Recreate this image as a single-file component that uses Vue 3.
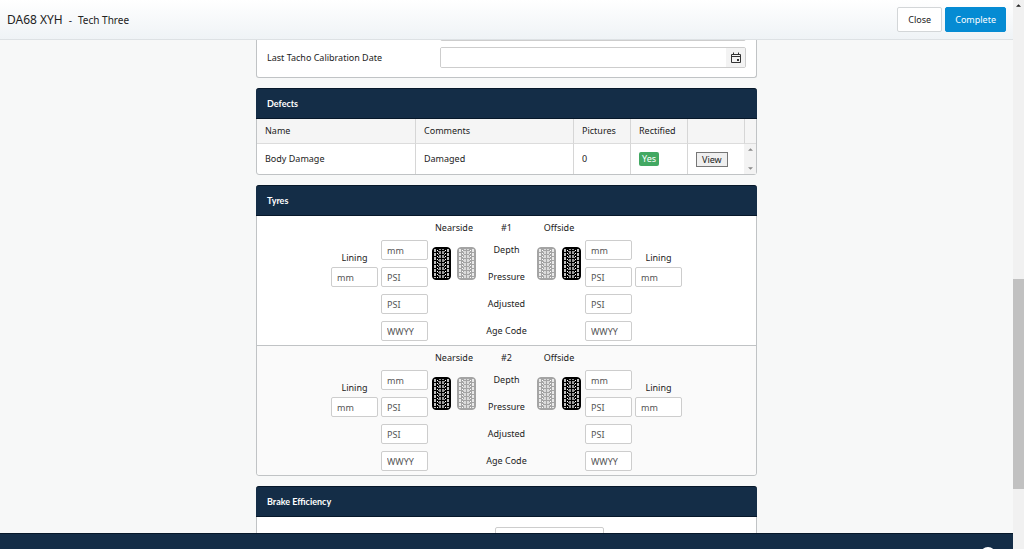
<script setup>
import { ref, reactive } from 'vue'

const calibrationDate = ref('')
const previousDate = ref('')
const brakeReading = ref('')

const defects = [
  { name: 'Body Damage', comments: 'Damaged', pictures: 0, rectified: 'Yes' },
]

const rows = [
  { key: 'depth', label: 'Depth', hint: 'mm' },
  { key: 'pressure', label: 'Pressure', hint: 'PSI' },
  { key: 'adjusted', label: 'Adjusted', hint: 'PSI' },
  { key: 'age', label: 'Age Code', hint: 'WWYY' },
]

const sides = [
  { key: 'near', label: 'Nearside', active: 0 },
  { key: 'off', label: 'Offside', active: 1 },
]

const emptySide = () => ({ depth: '', pressure: '', adjusted: '', age: '', lining: '' })
const axles = reactive([
  { number: 1, near: emptySide(), off: emptySide() },
  { number: 2, near: emptySide(), off: emptySide() },
])
</script>

<template>
  <div class="app">
    <div class="page">
      <header class="topbar">
        <h1 class="title">
          <span class="reg">DA68 XYH</span>
          <span>-</span>
          <span>Tech Three</span>
        </h1>
        <div class="actions">
          <button type="button" class="btn">Close</button>
          <button type="button" class="btn primary">Complete</button>
        </div>
      </header>

      <main class="content">
        <section class="card dates">
          <div class="date-row previous">
            <span></span>
            <input v-model="previousDate" class="field" type="text" aria-label="Previous date" />
          </div>
          <div class="date-row">
            <label for="tacho">Last Tacho Calibration Date</label>
            <div class="picker">
              <input id="tacho" v-model="calibrationDate" type="text" />
              <button type="button" aria-label="Choose date">
                <svg viewBox="0 0 12 12" width="12" height="12" fill="none" stroke="#333">
                  <path d="M1.5 2.5h9v8h-9z" />
                  <path d="M1.5 4.5h9" />
                  <path d="M3.5 .5v2M8.5 .5v2" />
                  <path d="M7 7h2v2h-2z" fill="#333" stroke="none" />
                </svg>
              </button>
            </div>
          </div>
        </section>

        <section class="card">
          <h2 class="card-title">Defects</h2>
          <table class="defects">
            <colgroup>
              <col /><col /><col class="narrow" /><col class="narrow" /><col class="narrow" /><col class="rail" />
            </colgroup>
            <thead>
              <tr>
                <th>Name</th>
                <th>Comments</th>
                <th>Pictures</th>
                <th>Rectified</th>
                <th></th>
                <th></th>
              </tr>
            </thead>
            <tbody>
              <tr v-for="d in defects" :key="d.name">
                <td>{{ d.name }}</td>
                <td>{{ d.comments }}</td>
                <td>{{ d.pictures }}</td>
                <td><span class="badge">{{ d.rectified }}</span></td>
                <td><button type="button" class="view">View</button></td>
                <td class="rail-cell">
                  <div class="mini-scroll">
                    <svg viewBox="0 0 6 3" width="5" height="3"><path d="M0 3h6L3 0z" fill="#8a8a8a" /></svg>
                    <svg viewBox="0 0 6 3" width="5" height="3"><path d="M0 0h6L3 3z" fill="#8a8a8a" /></svg>
                  </div>
                </td>
              </tr>
            </tbody>
          </table>
        </section>

        <section class="card">
          <h2 class="card-title">Tyres</h2>
          <div v-for="axle in axles" :key="axle.number" class="axle">
            <span class="head-near">Nearside</span>
            <span class="head-mid">#{{ axle.number }}</span>
            <span class="head-off">Offside</span>

            <div class="labels">
              <span v-for="r in rows" :key="r.key">{{ r.label }}</span>
            </div>

            <template v-for="s in sides" :key="s.key">
              <div class="lining" :class="s.key">
                <label :for="`lining-${axle.number}-${s.key}`">Lining</label>
                <input :id="`lining-${axle.number}-${s.key}`" v-model="axle[s.key].lining" class="field" type="text" placeholder="mm" />
              </div>
              <div class="readings" :class="s.key">
                <input
                  v-for="r in rows"
                  :key="r.key"
                  v-model="axle[s.key][r.key]"
                  class="field"
                  type="text"
                  :placeholder="r.hint"
                  :aria-label="`${s.label} ${axle.number} ${r.label}`"
                />
              </div>
              <div class="tyres" :class="s.key">
                <svg
                  v-for="n in 2"
                  :key="n"
                  class="tyre"
                  :class="{ faded: n - 1 !== s.active }"
                  viewBox="0 0 19 33"
                  width="19"
                  height="33"
                >
                  <rect x=".5" y=".5" width="18" height="32" rx="3.5" fill="currentColor" stroke="currentColor" />
                  <g fill="none" stroke="#fff">
                    <path d="M3 2v29M16 2v29" stroke-width="1.5" stroke-dasharray="3 1" />
                    <path d="M8 2v29M11 2v29" stroke-width="1.2" stroke-dasharray="3 1" stroke-dashoffset="2" />
                    <path d="M5.5 3v28M13.5 3v28" stroke-dasharray="1 2" />
                    <path d="M6.5 4v27M12.5 4v27" stroke-opacity=".6" stroke-dasharray="1 2" />
                  </g>
                </svg>
              </div>
            </template>
          </div>
        </section>

        <section class="card">
          <h2 class="card-title">Brake Efficiency</h2>
          <div class="brake">
            <input v-model="brakeReading" class="field" type="text" aria-label="Brake efficiency" />
          </div>
        </section>
      </main>

      <footer class="bottombar">
        <svg viewBox="0 0 16 16" width="16" height="16" fill="none" stroke="#fff" stroke-width="2">
          <circle cx="8" cy="8" r="7" />
        </svg>
      </footer>
    </div>

    <div class="scrollbar">
      <svg viewBox="0 0 6 3" width="5" height="3"><path d="M0 3h6L3 0z" fill="#222" /></svg>
      <div class="above"></div>
      <div class="thumb"></div>
      <div class="below"></div>
    </div>
  </div>
</template>

<style>
body {
  margin: 0;
}
</style>

<style scoped>
.app {
  display: flex;
  height: 100vh;
  overflow: hidden;
  font-family: "Noto Sans", "Open Sans", sans-serif;
  font-size: 9px;
  line-height: 14px;
  color: #222;
  background: #f7f8f8;
}
.app * {
  box-sizing: border-box;
}
button,
input {
  font: inherit;
  color: inherit;
  margin: 0;
}
.page {
  flex: 1;
  min-width: 0;
  display: flex;
  flex-direction: column;
}
.topbar {
  flex: none;
  display: flex;
  align-items: center;
  justify-content: space-between;
  height: 40px;
  padding: 0 7px;
  border-bottom: 1px solid #dde1e4;
  background: linear-gradient(#fff, #eff3f6);
}
.title {
  display: flex;
  align-items: center;
  gap: 6px;
  margin: 0;
  font-size: 10px;
  font-weight: 400;
}
.reg {
  font-size: 12px;
}
.actions {
  display: flex;
  gap: 3px;
}
.btn {
  height: 25px;
  padding: 0 10px;
  border: 1px solid #d3d6d8;
  border-radius: 2px;
  background: #fff;
}
.primary {
  padding: 0 9px;
  border-color: #058bd3;
  background: #058bd3;
  color: #fff;
}
.content {
  flex: 1;
  min-height: 0;
  overflow: hidden;
  display: flex;
  flex-direction: column;
  align-items: center;
  gap: 10px;
}
.card {
  flex: none;
  width: 100%;
  max-width: 501px;
  border: 1px solid #c0c3c5;
  border-radius: 3px;
  background: #fff;
}
.card-title {
  margin: -1px -1px 0;
  padding: 8px 11px;
  border-bottom: 1px solid #07182a;
  border-top: 1px solid #07182a;
  border-radius: 3px 3px 0 0;
  background: #142d47;
  color: #fff;
  font-family: Lato, "Noto Sans", sans-serif;
  font-size: 9px;
  line-height: 13px;
  font-weight: 700;
}
.field {
  width: 100%;
  height: 20px;
  padding: 0 5px;
  border: 1px solid #cdcdcd;
  border-radius: 2px;
  background: #fff;
}
.field::placeholder {
  color: #555;
  opacity: 1;
}
.dates {
  border-top: 0;
  border-radius: 0 0 3px 3px;
  padding: 0 10px 9px;
}
.date-row {
  display: grid;
  grid-template-columns: 173px 1fr;
  align-items: center;
}
.previous {
  height: 1px;
  margin-bottom: 6px;
  align-items: end;
  overflow: hidden;
}
.picker {
  display: flex;
  height: 21px;
  border: 1px solid #cdcdcd;
  border-radius: 2px;
  overflow: hidden;
}
.picker input {
  flex: 1;
  min-width: 0;
  padding: 0 5px;
  border: 0;
}
.picker button {
  display: flex;
  align-items: center;
  justify-content: center;
  width: 19px;
  padding: 0;
  border: 0;
  background: #f3f3f3;
}
.defects {
  width: 100%;
  table-layout: fixed;
  border-collapse: separate;
  border-spacing: 0;
}
.narrow {
  width: 57px;
}
.rail {
  width: 12px;
}
.defects th,
.defects td {
  padding: 0 8px;
  border-left: 1px solid #d6d6d6;
  text-align: left;
  font-weight: 400;
  white-space: nowrap;
}
.defects th:first-child,
.defects td:first-child {
  border-left: 0;
}
.defects th {
  height: 25px;
  border-bottom: 1px solid #dcdcdc;
  background: #f5f5f5;
}
.defects td {
  height: 30px;
}
.defects th:last-child {
  padding: 0;
}
.defects .rail-cell {
  padding: 0;
  border-left: 0;
  background: #f3f3f3;
}
.mini-scroll {
  display: flex;
  flex-direction: column;
  align-items: center;
  justify-content: space-between;
  height: 30px;
  padding: 4px 0;
}
.badge {
  display: inline-block;
  padding: 0 3px;
  border-radius: 2px;
  background: #42a862;
  color: #fff;
}
.view {
  display: block;
  height: 15px;
  padding: 0 5px;
  border: 1px solid #767676;
  background: #efefef;
  line-height: 13px;
}
.axle {
  display: grid;
  grid-template-columns: 47px 47px 46px 53px 46px 47px 47px;
  grid-template-rows: 17px 47px 52px;
  gap: 2px 3px;
  justify-content: center;
  justify-items: center;
  padding: 5px 0 4px;
}
.axle > * {
  grid-row: 2;
}
.axle + .axle {
  border-top: 1px solid #c0c3c5;
  border-radius: 0 0 3px 3px;
  background: #fafafa;
}
.axle > .head-near,
.axle > .head-mid,
.axle > .head-off {
  grid-row: 1;
}
.head-near {
  grid-column: 3;
}
.head-mid {
  grid-column: 4;
}
.head-off {
  grid-column: 5;
}
.axle > .labels,
.axle > .readings {
  grid-row: 2 / 4;
  display: flex;
  flex-direction: column;
  gap: 7px;
}
.labels {
  grid-column: 4;
  text-align: center;
  line-height: 20px;
  white-space: nowrap;
}
.lining {
  display: flex;
  flex-direction: column;
  align-items: center;
  justify-content: flex-end;
  gap: 2px;
}
.lining.near {
  grid-column: 1;
}
.readings.near {
  grid-column: 2;
}
.tyres.near {
  grid-column: 3;
}
.tyres.off {
  grid-column: 5;
}
.readings.off {
  grid-column: 6;
}
.lining.off {
  grid-column: 7;
}
.tyres {
  display: flex;
  align-items: center;
  justify-content: space-between;
  width: 44px;
}
.tyre {
  color: #000;
}
.faded {
  color: #a4a4a4;
}
.brake {
  display: flex;
  justify-content: center;
  padding: 10px 0 10px 86px;
}
.brake .field {
  width: 109px;
}
.bottombar {
  flex: none;
  display: flex;
  justify-content: flex-end;
  align-items: flex-start;
  height: 16px;
  padding: 13px 17px 0;
  overflow: hidden;
  border-top: 1px solid #07182a;
  background: #142d47;
}
.bottombar svg {
  flex: none;
}
.scrollbar {
  flex: none;
  display: flex;
  flex-direction: column;
  align-items: center;
  width: 11px;
  padding-top: 4px;
  background: #f1f1f1;
}
.above {
  flex: 272;
}
.thumb {
  flex: 210;
  width: 100%;
  background: #c1c1c1;
}
.below {
  flex: 60;
}
</style>
